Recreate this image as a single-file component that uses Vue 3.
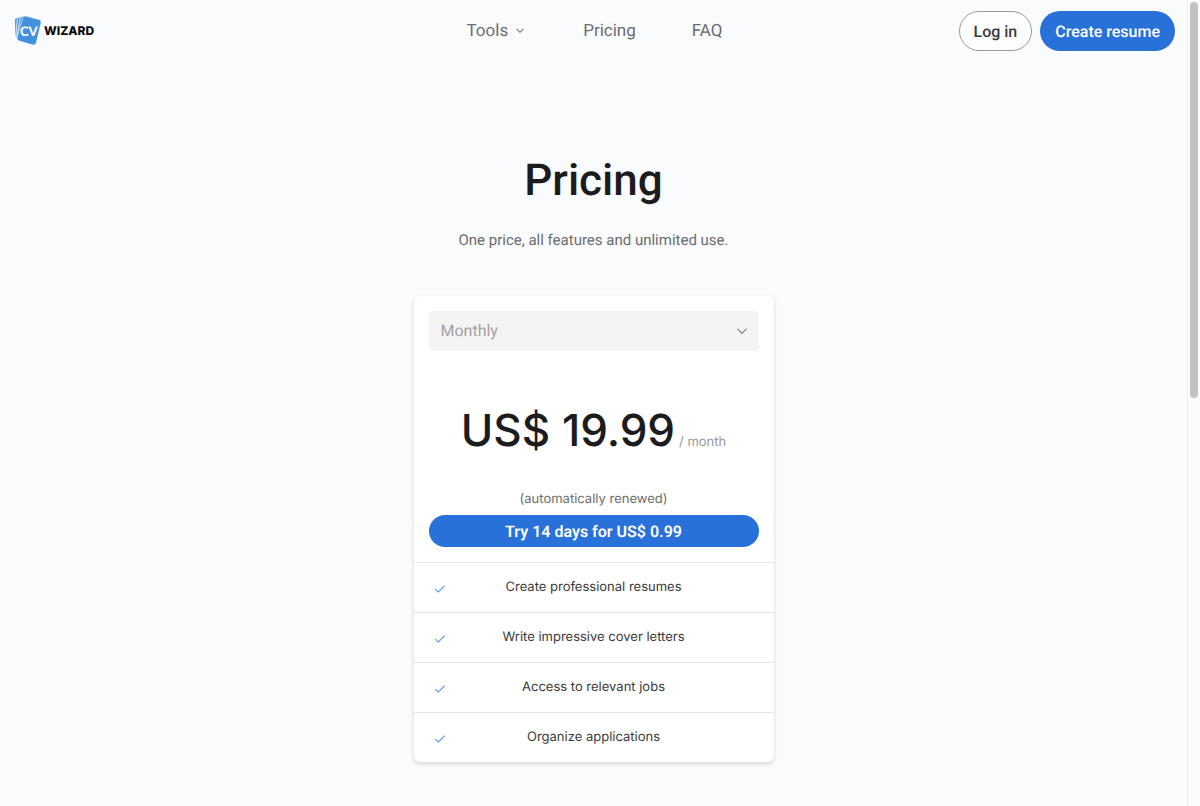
<script setup>
import { ref } from 'vue'

const period = ref('Monthly')
const features = [
  'Create professional resumes',
  'Write impressive cover letters',
  'Access to relevant jobs',
  'Organize applications',
]
</script>

<template>
  <div class="shell">
    <div class="page">
      <header class="bar">
        <a class="logo" href="#" aria-label="CV Wizard">
          <svg class="mark" viewBox="0 0 28 32" aria-hidden="true">
            <path d="M1 5.2 Q1 3.4 2.6 3.1 L5 2.8 L3 22 L1.4 20.5 Z" fill="#4a94e0" />
            <path d="M3.4 3.6 Q4 2.2 5.4 2.1 L8 1.9 L4.6 23 L2.2 22.6 Z" fill="#4a94e0" stroke="#fafbfd" stroke-width=".8" />
            <path d="M6.3 3 Q7 1.4 8.6 1.3 L12 1.1 L6 25 L3 24 Z" fill="#4a94e0" stroke="#fafbfd" stroke-width=".8" />
            <path d="M9 2.5 Q9.6 .5 11.6 1 L25.2 4.6 Q27.6 5.4 27.1 7.8 L22.2 28 Q21.4 30.6 18.8 30 L4.6 25.8 Q2.4 25 3 22.8 Z" fill="#4390df" stroke="#fafbfd" stroke-width=".6" />
            <text x="6" y="21" class="cv">CV</text>
          </svg>
          <span class="word">WIZARD</span>
        </a>
        <nav class="nav">
          <a href="#" class="tools">Tools
            <svg width="8" height="6" viewBox="0 0 8 6" aria-hidden="true"><path d="M.8 1.2 4 4.4 7.2 1.2" /></svg>
          </a>
          <a href="#">Pricing</a>
          <a href="#">FAQ</a>
        </nav>
        <div class="actions">
          <button type="button" class="login">Log in</button>
          <button type="button" class="create">Create resume</button>
        </div>
      </header>

      <main class="main">
        <h1>Pricing</h1>
        <p class="lead">One price, all features and unlimited use.</p>

        <section class="card">
          <div class="offer">
            <div class="select">
              <select v-model="period" aria-label="Billing period">
                <option>Monthly</option>
              </select>
              <svg width="10" height="7" viewBox="0 0 10 7" aria-hidden="true"><path d="M.8 1.2 5 5.4 9.2 1.2" /></svg>
            </div>
            <p class="price"><span class="amount">US$ 19.99</span><span class="per">/ month</span></p>
            <p class="renew">(automatically renewed)</p>
            <button type="button" class="try">Try 14 days for US$ 0.99</button>
          </div>
          <ul class="features">
            <li v-for="f in features" :key="f">
              <svg width="10" height="8" viewBox="0 0 10 8" aria-hidden="true"><path d="M.6 4.4 3.2 7 9.4 1" /></svg>
              <span>{{ f }}</span>
            </li>
          </ul>
        </section>
      </main>
    </div>
    <div class="track" aria-hidden="true"><div class="thumb"></div></div>
  </div>
</template>

<style>
body {
  background: #fafbfd;
}
</style>

<style scoped>
.shell {
  display: flex;
  min-height: 100vh;
  font-family: Roboto, "Liberation Sans", sans-serif;
  text-rendering: geometricPrecision;
  color: #1c1c1e;
  background: #fafbfd;
}
.shell * {
  box-sizing: border-box;
}
.page {
  flex: 1;
  min-width: 0;
}
.bar {
  display: grid;
  grid-template-columns: 1fr auto 1fr;
  align-items: center;
  height: 62px;
  padding: 0 12px 0 14px;
}
a {
  text-decoration: none;
  color: inherit;
}
.logo {
  display: flex;
  align-items: center;
  gap: 2px;
  justify-self: start;
}
.mark {
  width: 28px;
  height: 32px;
}
.cv {
  font: 900 13px Lato, sans-serif;
  fill: #fff;
}
.word {
  font: 800 12px/20px Inter, sans-serif;
  color: #0b0b0c;
}
.nav {
  display: flex;
  gap: 56px;
  font-size: 17px;
  line-height: 24px;
  color: #6c6c6e;
}
.tools {
  display: flex;
  align-items: center;
  gap: 8px;
  padding-right: 3px;
}
svg path {
  stroke-linecap: round;
  stroke-linejoin: round;
}
.tools path,
.select path {
  fill: none;
  stroke: #7c7c7f;
  stroke-width: 1.1;
}
.actions {
  display: flex;
  justify-content: flex-end;
  gap: 8px;
}
button {
  font-family: inherit;
  text-rendering: inherit;
  border: 0;
  cursor: pointer;
  white-space: nowrap;
}
.actions button {
  height: 40px;
  padding: 0 15px;
  border-radius: 20px;
  font-size: 16px;
  font-weight: 500;
}
.actions .login {
  padding: 0 14px;
  background: #fcfdfe;
  border: 1px solid #9a9a9c;
  color: #3a3a3c;
}
.actions .create,
.try {
  background: #2871d9;
  color: #fff;
}
.main {
  display: flex;
  flex-direction: column;
  align-items: center;
  padding: 88px 16px 44px;
}
h1 {
  margin: 0;
  font-size: 44px;
  line-height: 60px;
  font-weight: 500;
}
.lead {
  margin: 18px 0 0;
  font-size: 15px;
  line-height: 24px;
  color: #6c6c6e;
}
.card {
  width: 100%;
  max-width: 360px;
  margin-top: 44px;
  background: #fff;
  border-radius: 6px;
  box-shadow: 0 2px 4px rgba(40, 50, 50, 0.18);
}
.offer {
  padding: 15px;
  text-align: center;
}
.select {
  position: relative;
}
.select select {
  appearance: none;
  display: block;
  width: 100%;
  height: 40px;
  padding: 0 12px;
  border: 0;
  border-radius: 4px;
  background: #f4f4f4;
  color: #a1a1a3;
  font: 16px/24px Roboto, sans-serif;
  text-rendering: inherit;
}
.select svg {
  position: absolute;
  right: 12px;
  top: 17px;
  pointer-events: none;
}
.price {
  display: flex;
  justify-content: center;
  align-items: baseline;
  gap: 4px;
  margin: 47px 0 0;
  font-family: Inter, sans-serif;
  line-height: 64px;
}
.amount {
  font-size: 44px;
  font-weight: 500;
}
.per {
  font-size: 13px;
  color: #98989a;
}
.renew {
  margin: 15px 0 0;
  font: 13px/20px Inter, sans-serif;
  color: #6c6c6e;
}
.try {
  display: block;
  width: 100%;
  height: 32px;
  margin-top: 6px;
  border-radius: 16px;
  font-size: 16px;
  font-weight: 600;
}
.features {
  list-style: none;
  margin: 0;
  padding: 0;
}
.features li {
  display: grid;
  grid-template-columns: 20px 1fr 20px;
  align-items: center;
  height: 50px;
  padding: 0 21px 1px;
  border-top: 1px solid #e5e6e8;
  font: 13px/20px Inter, sans-serif;
  text-align: center;
  color: #3a3a3c;
}
.features svg {
  margin-top: 4px;
}
.features path {
  fill: none;
  stroke: #669fe3;
  stroke-width: 1.1;
}
.track {
  width: 13px;
  padding: 2px 2px 0;
  border-left: 1px solid #ececee;
  background: #fcfcfd;
}
.thumb {
  width: 8px;
  height: 396px;
  border-radius: 4px;
  background: #c1c1c1;
}
</style>
